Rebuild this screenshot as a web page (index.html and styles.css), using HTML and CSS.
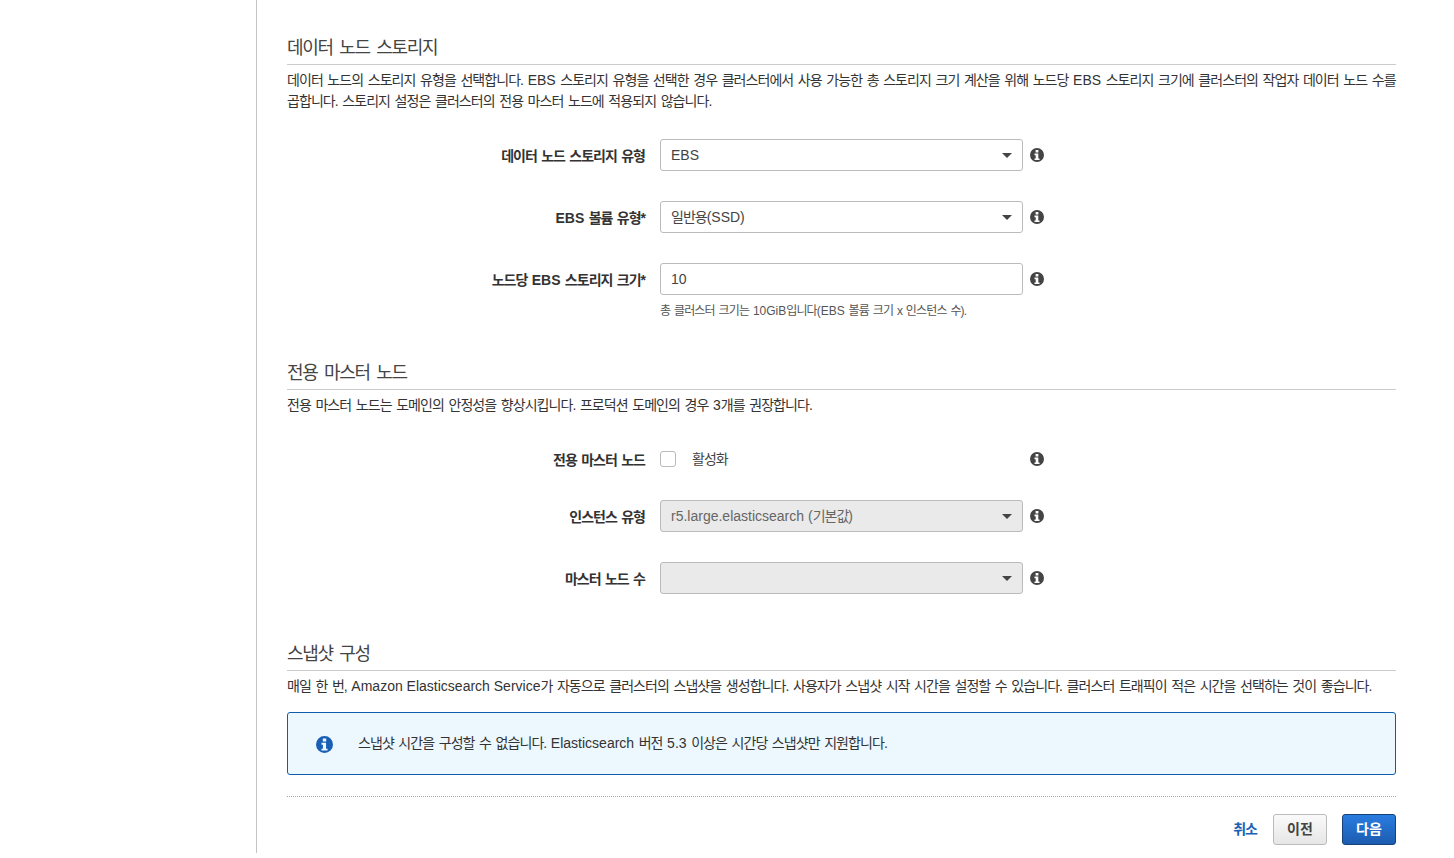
FILE: index.html
```html
<!DOCTYPE html>
<html lang="ko">
<head>
  <meta charset="UTF-8" />
  <title>도메인 구성</title>
  <link rel="stylesheet" href="styles.css">
</head>
<body>
  <svg class="defs" width="0" height="0">
    <symbol id="info" viewBox="0 0 14 14">
      <path fill-rule="evenodd" d="M7 0a7 7 0 1 1 0 14A7 7 0 0 1 7 0zM5.6 2v2.5h2.8V2zM4.5 5.6v1.6h1.2v3.2H4.5V12h5v-1.6H8.3V5.6z"/>
    </symbol>
  </svg>
  <div class="page">
    <aside class="sidebar"></aside>
    <main class="content">

      <section class="block block-storage">
        <h2>데이터 노드 스토리지</h2>
        <p class="desc">데이터 노드의 스토리지 유형을 선택합니다. <span class="en">EBS</span> 스토리지 유형을 선택한 경우 클러스터에서 사용 가능한 총 스토리지 크기 계산을 위해 노드당 <span class="en">EBS</span> 스토리지 크기에 클러스터의 작업자 데이터 노드 수를<br>곱합니다. 스토리지 설정은 클러스터의 전용 마스터 노드에 적용되지 않습니다.</p>
        <div class="rows">
          <div class="row">
            <label class="lbl">데이터 노드 스토리지 유형</label>
            <div class="field select"><span class="en">EBS</span></div>
            <svg class="ico"><use href="#info"/></svg>
          </div>
          <div class="row">
            <label class="lbl"><span class="en">EBS</span> 볼륨 유형*</label>
            <div class="field select">일반용<span class="en">(SSD)</span></div>
            <svg class="ico"><use href="#info"/></svg>
          </div>
          <div class="row">
            <label class="lbl">노드당 <span class="en">EBS</span> 스토리지 크기*</label>
            <div class="field"><span class="en">10</span></div>
            <svg class="ico"><use href="#info"/></svg>
          </div>
          <p class="hint">총 클러스터 크기는 <span class="en">10GiB</span>입니다<span class="en">(EBS</span> 볼륨 크기 x 인스턴스 수).</p>
        </div>
      </section>

      <section class="block block-master">
        <h2>전용 마스터 노드</h2>
        <p class="desc">전용 마스터 노드는 도메인의 안정성을 향상시킵니다. 프로덕션 도메인의 경우 <span class="en">3</span>개를 권장합니다.</p>
        <div class="rows rows-master">
          <div class="row row-check">
            <label class="lbl">전용 마스터 노드</label>
            <div class="check-wrap"><span class="check"></span><span class="check-text">활성화</span></div>
            <svg class="ico"><use href="#info"/></svg>
          </div>
          <div class="row">
            <label class="lbl">인스턴스 유형</label>
            <div class="field select disabled"><span class="en">r5.large.elasticsearch (</span>기본값<span class="en">)</span></div>
            <svg class="ico"><use href="#info"/></svg>
          </div>
          <div class="row">
            <label class="lbl">마스터 노드 수</label>
            <div class="field select disabled"></div>
            <svg class="ico"><use href="#info"/></svg>
          </div>
        </div>
      </section>

      <section class="block block-snapshot">
        <h2>스냅샷 구성</h2>
        <p class="desc">매일 한 번, <span class="en">Amazon Elasticsearch Service</span>가 자동으로 클러스터의 스냅샷을 생성합니다. 사용자가 스냅샷 시작 시간을 설정할 수 있습니다. 클러스터 트래픽이 적은 시간을 선택하는 것이 좋습니다.</p>
        <div class="alert">
          <svg class="alert-ico"><use href="#info"/></svg>
          <span class="alert-text">스냅샷 시간을 구성할 수 없습니다. <span class="en">Elasticsearch</span> 버전 <span class="en">5.3</span> 이상은 시간당 스냅샷만 지원합니다.</span>
        </div>
      </section>

      <div class="actions">
        <a class="cancel" href="#">취소</a>
        <button class="btn">이전</button>
        <button class="btn btn-primary">다음</button>
      </div>
    </main>
  </div>
</body>
</html>
```

FILE: styles.css
```css
html, body {
  margin: 0;
  padding: 0;
  background-color: #fff;
}
body {
  font-family: "Liberation Sans", "Noto Sans CJK KR", sans-serif;
  font-size: 14px;
  letter-spacing: -1px;
  word-spacing: 1.5px;
  color: #333;
  overflow: hidden;
}
.en {
  letter-spacing: 0;
  word-spacing: 0;
}
.defs {
  display: block;
  height: 0;
}
.page {
  display: flex;
  height: 853px;
}
.sidebar {
  width: 256px;
  flex: none;
  border-right: 1px solid #c4c4c4;
}
.content {
  flex: 1;
  padding: 35px 58px 0 30px;
}
.block h2 {
  margin: 0;
  height: 29px;
  line-height: 26px;
  font-size: 18px;
  font-weight: 400;
  letter-spacing: -1.35px;
  word-spacing: 3px;
  color: #444;
  border-bottom: 1px solid #ccc;
}
.desc {
  margin: 5px 0 0;
  line-height: 21px;
  letter-spacing: -0.94px;
  word-spacing: 1.6px;
  color: #333;
}
.rows {
  margin-top: 27px;
}
.rows-master {
  margin-top: 35px;
}
.row {
  display: flex;
  align-items: center;
  height: 32px;
  margin-bottom: 30px;
}
.lbl {
  box-sizing: border-box;
  width: 373px;
  padding: 0 15px 1px 0;
  flex: none;
  text-align: right;
  font-weight: 700;
  color: #333;
}
.field {
  position: relative;
  box-sizing: border-box;
  width: 363px;
  height: 32px;
  padding: 0 10px;
  line-height: 30px;
  border: 1px solid #bbb;
  border-radius: 3px;
  background-color: #fff;
  color: #444;
}
.select::after {
  content: "";
  position: absolute;
  right: 10px;
  top: 13px;
  border-left: 5.5px solid transparent;
  border-right: 5.5px solid transparent;
  border-top: 5.5px solid #444;
}
.disabled {
  background-color: #eaeaea;
  color: #666;
}
.ico {
  width: 14px;
  height: 14px;
  margin-left: 7px;
  flex: none;
  fill: #444;
}
.hint {
  margin: -22px 0 0 373px;
  line-height: 16px;
  font-size: 12px;
  letter-spacing: -0.85px;
  word-spacing: 1.3px;
  color: #555;
}
.row-check {
  height: 16px;
  margin-bottom: 33px;
}
.check-wrap {
  display: flex;
  align-items: center;
  width: 363px;
}
.check {
  box-sizing: border-box;
  width: 16px;
  height: 16px;
  border: 1px solid #bbb;
  border-radius: 3px;
  background-color: #fff;
}
.check-text {
  margin-left: 16px;
  padding-bottom: 2px;
  color: #444;
}
.block-master {
  margin-top: 41px;
}
.block-snapshot {
  margin-top: 47px;
}
.alert {
  display: flex;
  align-items: center;
  box-sizing: border-box;
  height: 63px;
  margin-top: 15px;
  padding-left: 28px;
  border: 1px solid #0e5cad;
  border-radius: 3px;
  background-color: #ecf7fe;
}
.alert-ico {
  width: 17px;
  height: 17px;
  margin: 2px 25px 0 0;
  flex: none;
  fill: #1a5fb4;
}
.alert-text {
  padding-bottom: 4px;
  letter-spacing: -0.94px;
  word-spacing: 1.6px;
}
.actions {
  display: flex;
  align-items: center;
  justify-content: flex-end;
  margin-top: 21px;
  padding-top: 17px;
  border-top: 1px dotted #aaa;
}
.cancel {
  margin-right: 16px;
  padding-bottom: 3px;
  font-size: 14px;
  font-weight: 700;
  color: #1a62b8;
  text-decoration: none;
}
.btn {
  box-sizing: border-box;
  width: 54px;
  height: 31px;
  padding: 0 0 3px;
  font-family: inherit;
  font-size: 14px;
  font-weight: 700;
  color: #444;
  border: 1px solid #bbb;
  border-radius: 3px;
  background: linear-gradient(#fafafa, #e6e6e6);
}
.btn-primary {
  margin-left: 15px;
  color: #fff;
  border-color: #15427a;
  background: linear-gradient(#2a7ce0, #1c5cb0);
}
```
